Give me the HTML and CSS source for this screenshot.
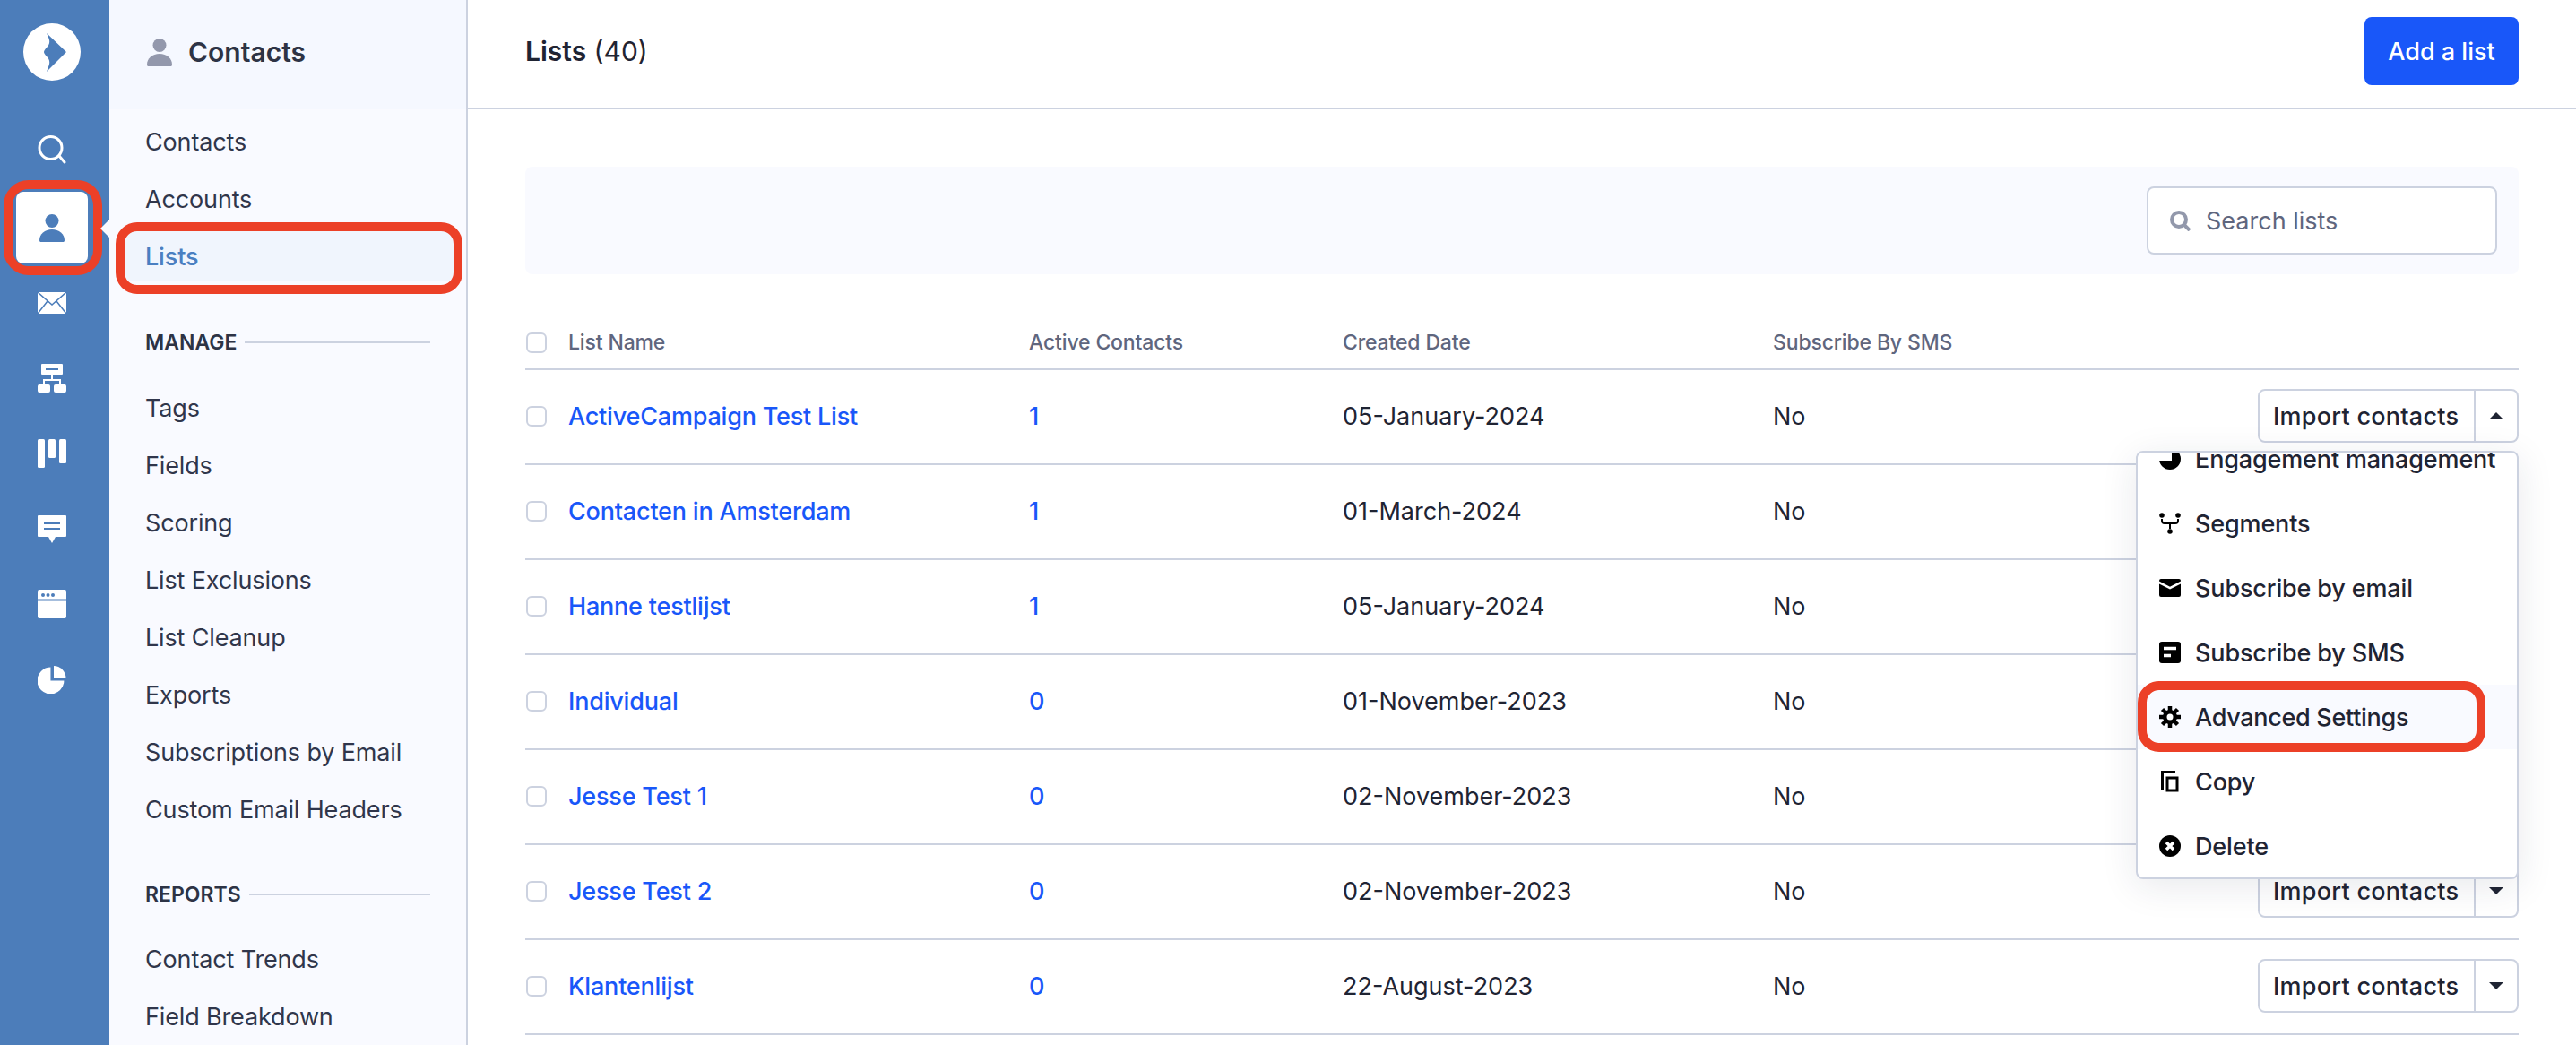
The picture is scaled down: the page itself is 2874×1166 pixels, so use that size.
FILE: index.html
```html
<!DOCTYPE html>
<html lang="en">
<head>
<meta charset="utf-8">
<title>Lists</title>
<link rel="stylesheet" href="styles.css">
</head>
<body>
<div class="app">
  <nav class="rail">
    <div class="logo">
      <svg viewBox="-32 -32 64 64" width="64" height="64"><circle r="32" fill="#fff"/><path fill="#4c7dba" d="M-6-21 16 0-6 22C-3 14-1 11-5 6-8 3-9 1-9 0-9-1-8-3-5-6-1-11-3-14-6-21Z"/></svg>
    </div>
    <div class="rail-item rail-search">
      <svg viewBox="0 0 32 32" width="32" height="32" fill="none" stroke="#fff" stroke-width="3"><circle cx="14.5" cy="14" r="12.5"/><path d="M24 23l6 7" stroke-linecap="round"/></svg>
    </div>
    <div class="rail-item">
      <div class="rail-active">
        <svg viewBox="0 0 28 31" width="28" height="31" fill="#4c7dba"><circle cx="14" cy="7.5" r="7.5"/><path d="M0 29C0 22 6 17 14 17s14 5 14 12c0 1.500-.5 2-2 2H2c-1.500 0-2-.5-2-2Z"/></svg>
      </div>
      <span class="mark mark-rail"></span>
      <span class="notch"></span>
    </div>
    <div class="rail-item">
      <svg viewBox="0 0 32 24" width="32" height="24"><rect width="32" height="24" fill="#fff"/><path d="M0 0 16 14 32 0M0 24 11 10M32 24 21 10" fill="none" stroke="#4c7dba" stroke-width="1.500"/></svg>
    </div>
    <div class="rail-item">
      <svg viewBox="0 0 32 32" width="32" height="32"><rect x="4" width="24" height="12" rx="1" fill="#fff"/><rect x="9" y="5" width="14" height="2" fill="#4c7dba"/><path d="M16 12v6M7 24v-6h18v6" fill="none" stroke="#fff" stroke-width="2"/><rect y="23" width="14" height="9" rx="2" fill="#fff"/><rect x="18" y="23" width="14" height="9" rx="2" fill="#fff"/></svg>
    </div>
    <div class="rail-item">
      <svg viewBox="0 0 32 32" width="32" height="32" fill="#fff"><rect width="8" height="32" rx="1.500"/><rect x="12" width="8" height="21" rx="1.500"/><rect x="24" width="8" height="27" rx="1.500"/></svg>
    </div>
    <div class="rail-item">
      <svg viewBox="0 0 32 31" width="32" height="31"><path fill="#fff" d="M1 0h30a1 1 0 0 1 1 1v22a1 1 0 0 1-1 1H20l-4 7-4-7H1a1 1 0 0 1-1-1V1a1 1 0 0 1 1-1Z"/><path d="M7 9h18M7 15h18" stroke="#4c7dba" stroke-width="2"/></svg>
    </div>
    <div class="rail-item">
      <svg viewBox="0 0 32 32" width="32" height="32"><rect width="32" height="32" rx="2" fill="#fff"/><path d="M0 11.500h32" stroke="#4c7dba" stroke-width="2"/><g fill="#4c7dba"><circle cx="6" cy="6" r="2"/><circle cx="11.500" cy="6" r="2"/><circle cx="17" cy="6" r="2"/></g></svg>
    </div>
    <div class="rail-item">
      <svg viewBox="0 0 32 32" width="32" height="32" fill="#fff"><path d="M15 2.500V17h14.500A14.500 14.500 0 1 1 15 2.500Z" transform="translate(-1 0) scale(1.030)"/><path d="M18 1a14 14 0 0 1 13.500 13.500H18Z"/></svg>
    </div>
  </nav>

  <aside class="side">
    <header class="side-head">
      <svg viewBox="0 0 28 31" width="28" height="31" fill="#9398ac"><circle cx="14" cy="7.500" r="7.500"/><path d="M0 29C0 22 6 17 14 17s14 5 14 12c0 1.500-.5 2-2 2H2c-1.500 0-2-.5-2-2Z"/></svg>
      <h2 class="side-title">Contacts</h2>
    </header>
    <ul class="side-list">
      <li class="side-item">Contacts</li>
      <li class="side-item">Accounts</li>
      <li class="side-item side-current">Lists<span class="mark mark-lists"></span></li>
    </ul>
    <h3 class="side-section side-section-first"><span>MANAGE</span></h3>
    <ul class="side-list">
      <li class="side-item">Tags</li>
      <li class="side-item">Fields</li>
      <li class="side-item">Scoring</li>
      <li class="side-item">List Exclusions</li>
      <li class="side-item">List Cleanup</li>
      <li class="side-item">Exports</li>
      <li class="side-item">Subscriptions by Email</li>
      <li class="side-item">Custom Email Headers</li>
    </ul>
    <h3 class="side-section"><span>REPORTS</span></h3>
    <ul class="side-list">
      <li class="side-item">Contact Trends</li>
      <li class="side-item">Field Breakdown</li>
    </ul>
  </aside>

  <main class="main">
    <header class="topbar">
      <h1 class="page-title"><b>Lists</b> (40)</h1>
      <button class="primary">Add a list</button>
    </header>
    <section class="content">
      <div class="toolbar">
        <div class="search">
          <svg viewBox="0 0 23 23" width="23" height="23" fill="none" stroke="#9298ab" stroke-width="4"><circle cx="10" cy="10" r="8"/><path d="M15 15l7 7"/></svg>
          <span>Search lists</span>
        </div>
      </div>
      <div class="row head">
        <span class="check"></span>
        <span>List Name</span>
        <span>Active Contacts</span>
        <span>Created Date</span>
        <span>Subscribe By SMS</span>
        <span></span>
      </div>
      <div class="row">
        <span class="check"></span>
        <a class="link">ActiveCampaign Test List</a>
        <a class="link">1</a>
        <span>05-January-2024</span>
        <span>No</span>
        <div class="action">
          <div class="split"><span class="split-label">Import contacts</span><span class="split-caret"><i class="caret caret-up"></i></span></div>
          <div class="menu">
            <ul class="menu-list">
              <li class="menu-item"><svg viewBox="0 0 24 24" width="24" height="24"><circle cx="12" cy="12" r="12"/><path d="M0 0h14v14H0Z" fill="#fff"/></svg>Engagement management</li>
              <li class="menu-item"><svg viewBox="0 0 24 24" width="24" height="24"><circle cx="3" cy="3" r="2.800"/><circle cx="21" cy="3" r="2.800"/><circle cx="12" cy="21" r="2.800"/><path d="M3 7v2q0 3 3 3h12q3 0 3-3V7M12 12v6" fill="none" stroke="#000" stroke-width="2"/></svg>Segments</li>
              <li class="menu-item"><svg viewBox="0 0 24 20" width="24" height="20"><rect width="24" height="20" rx="2"/><path d="M-1 3.500 12 10 25 3.500" fill="none" stroke="#fff" stroke-width="2.500"/></svg>Subscribe by email</li>
              <li class="menu-item"><svg viewBox="0 0 24 24" width="24" height="24"><rect width="24" height="24" rx="3"/><path d="M5 7.500h14M5 15.500h8" stroke="#fff" stroke-width="3.500"/></svg>Subscribe by SMS</li>
              <li class="menu-item menu-hover"><svg viewBox="0 0 24 24" width="24" height="24"><circle cx="12" cy="12" r="8"/><path d="M12 0v24M0 12h24M3.500 3.500l17 17M20.500 3.500l-17 17" stroke="#000" stroke-width="4.500"/><circle cx="12" cy="12" r="3.500" fill="#fff"/></svg><span class="adv-label">Advanced Settings</span><span class="mark mark-adv"></span></li>
              <li class="menu-item"><svg viewBox="0 0 24 24" width="24" height="24"><path d="M2 0h16v3H5v18H2Z"/><rect x="9" y="8" width="11" height="14" fill="none" stroke="#000" stroke-width="3"/></svg>Copy</li>
              <li class="menu-item"><svg viewBox="0 0 24 24" width="24" height="24"><circle cx="12" cy="12" r="12"/><path d="M8 8l8 8M16 8l-8 8" stroke="#fff" stroke-width="3.500"/></svg>Delete</li>
            </ul>
          </div>
        </div>
      </div>
      <div class="row">
        <span class="check"></span>
        <a class="link">Contacten in Amsterdam</a>
        <a class="link">1</a>
        <span>01-March-2024</span>
        <span>No</span>
      </div>
      <div class="row">
        <span class="check"></span>
        <a class="link">Hanne testlijst</a>
        <a class="link">1</a>
        <span>05-January-2024</span>
        <span>No</span>
      </div>
      <div class="row">
        <span class="check"></span>
        <a class="link">Individual</a>
        <a class="link">0</a>
        <span>01-November-2023</span>
        <span>No</span>
      </div>
      <div class="row">
        <span class="check"></span>
        <a class="link">Jesse Test 1</a>
        <a class="link">0</a>
        <span>02-November-2023</span>
        <span>No</span>
      </div>
      <div class="row">
        <span class="check"></span>
        <a class="link">Jesse Test 2</a>
        <a class="link">0</a>
        <span>02-November-2023</span>
        <span>No</span>
        <div class="action"><div class="split"><span class="split-label">Import contacts</span><span class="split-caret"><i class="caret"></i></span></div></div>
      </div>
      <div class="row">
        <span class="check"></span>
        <a class="link">Klantenlijst</a>
        <a class="link">0</a>
        <span>22-August-2023</span>
        <span>No</span>
        <div class="action"><div class="split"><span class="split-label">Import contacts</span><span class="split-caret"><i class="caret"></i></span></div></div>
      </div>
    </section>
  </main>
</div>
</body>
</html>
```
FILE: styles.css
```css
* { box-sizing: border-box; }
html, body { margin: 0; height: 100%; overflow: hidden; background: #fff; }
body { font-family: "Inter", "Liberation Sans", sans-serif; font-size: 27px; color: #1f2433; }
ul { list-style: none; margin: 0; padding: 0; }
h1, h2, h3 { margin: 0; font-weight: inherit; font-size: inherit; }
svg { display: block; flex: none; }

.app { display: flex; height: 1166px; }

.rail { width: 122px; flex: none; background: #4c7dba; padding-top: 26px; display: flex; flex-direction: column; align-items: flex-start; }
.logo { height: 64px; margin: 0 0 35px 26px; }
.rail-item { position: relative; width: 116px; height: 84px; display: flex; align-items: center; justify-content: center; }
.rail-search { margin-bottom: 3px; }
.rail-active { width: 80px; height: 80px; background: #fff; border-radius: 8px; display: flex; align-items: center; justify-content: center; }
.notch { position: absolute; right: -6px; top: 33px; width: 0; height: 0; border: 10px solid transparent; border-right-color: #f9faff; border-left-width: 0; }

.mark { position: absolute; border: 10px solid #ec4027; pointer-events: none; }
.mark-rail { left: 4px; top: -11px; width: 110px; height: 106px; border-radius: 28px; }
.mark-lists { left: -10px; right: -10px; top: -10px; bottom: -14px; border-radius: 24px; }
.mark-adv { left: 0; width: 388px; top: -4px; bottom: -3px; border-radius: 24px; }

.side { width: 400px; flex: none; background: #f9faff; border-right: 2px solid #ccd2e0; color: #30364b; }
.side-head { height: 122px; background: #f5f8ff; padding: 0 0 6px 42px; display: flex; align-items: center; gap: 18px; }
.side-title { font-size: 30px; font-weight: 600; color: #2d3345; }
.side-list { padding: 8px 0 0; letter-spacing: -.15px; }
.side-item { position: relative; height: 56px; margin: 0 14px 8px 17px; padding-left: 23px; display: flex; align-items: center; border-radius: 8px; }
.side-current { background: #f0f5fd; color: #4a7fc1; font-weight: 500; }
.side-section { height: 40px; margin: 47px 40px 16px 40px; display: flex; align-items: center; gap: 9px; font-size: 23px; font-weight: 600; color: #2d3345; }
.side-section-first { margin-top: 48px; margin-bottom: 17px; }
.side-section::after { content: ""; flex: 1; height: 2px; background: #ccd2e0; }

.main { flex: 1; min-width: 0; display: flex; flex-direction: column; }
.topbar { height: 122px; border-bottom: 2px solid #ccd2e0; padding: 19px 64px 25px; display: flex; align-items: center; justify-content: space-between; }
.page-title { font-size: 30px; }
.page-title b { font-weight: 600; }
.primary { width: 172px; height: 76px; border: 0; border-radius: 8px; background: #1957f9; color: #fff; font: 500 27px "Inter", "Liberation Sans", sans-serif; padding: 0; }

.content { padding: 64px 64px 0; }
.toolbar { height: 120px; background: #f9faff; border-radius: 8px; padding-right: 24px; display: flex; align-items: center; justify-content: flex-end; }
.search { width: 391px; height: 76px; background: #fff; border: 2px solid #ccd2e0; border-radius: 8px; padding-left: 24px; display: flex; align-items: center; gap: 17px; color: #5f667e; }

.row { display: grid; grid-template-columns: 48px 514px 350px 480px 1fr auto; align-items: center; height: 106px; padding-bottom: 2px; border-bottom: 2px solid #ccd2e0; }
.head { height: 107px; padding-top: 47px; padding-bottom: 0; font-size: 23px; font-weight: 500; letter-spacing: -.15px; color: #5f667e; }
.check { display: block; width: 23px; height: 23px; margin-left: 1px; border: 2px solid #ccd2e0; border-radius: 6px; background: #fff; }
.link { color: #1957f9; font-weight: 500; letter-spacing: -.2px; }

.action { position: relative; grid-column: 6; }
.split { width: 291px; height: 60px; border: 2px solid #ccd2e0; border-radius: 8px; background: #fff; display: flex; align-items: center; }
.split-label { width: 239px; padding-left: 15px; font-weight: 500; letter-spacing: .25px; white-space: nowrap; }
.split-caret { flex: 1; height: 100%; border-left: 2px solid #ccd2e0; display: flex; align-items: center; justify-content: center; }
.caret { width: 0; height: 0; border: 8px solid transparent; border-bottom-width: 0; border-top-color: #1f2433; }
.caret-up { border-top-width: 0; border-bottom-width: 8px; border-top-color: transparent; border-bottom-color: #1f2433; }

.menu { position: absolute; z-index: 5; top: 69px; right: 0; width: 427px; height: 478px; background: #fff; border: 2px solid #ccd2e0; border-radius: 8px; box-shadow: 0 8px 40px rgba(30, 40, 70, .1); }
.menu-list { height: 100%; overflow: hidden; border-radius: 6px; letter-spacing: -.15px; }
.menu-item { position: relative; height: 72px; padding-left: 24px; display: flex; align-items: center; gap: 16px; font-weight: 500; color: #1f2433; white-space: nowrap; }
.menu-item:first-child { margin-top: -29px; }
.menu-hover { background: #f9faff; }
.adv-label { letter-spacing: -.3px; }
```
